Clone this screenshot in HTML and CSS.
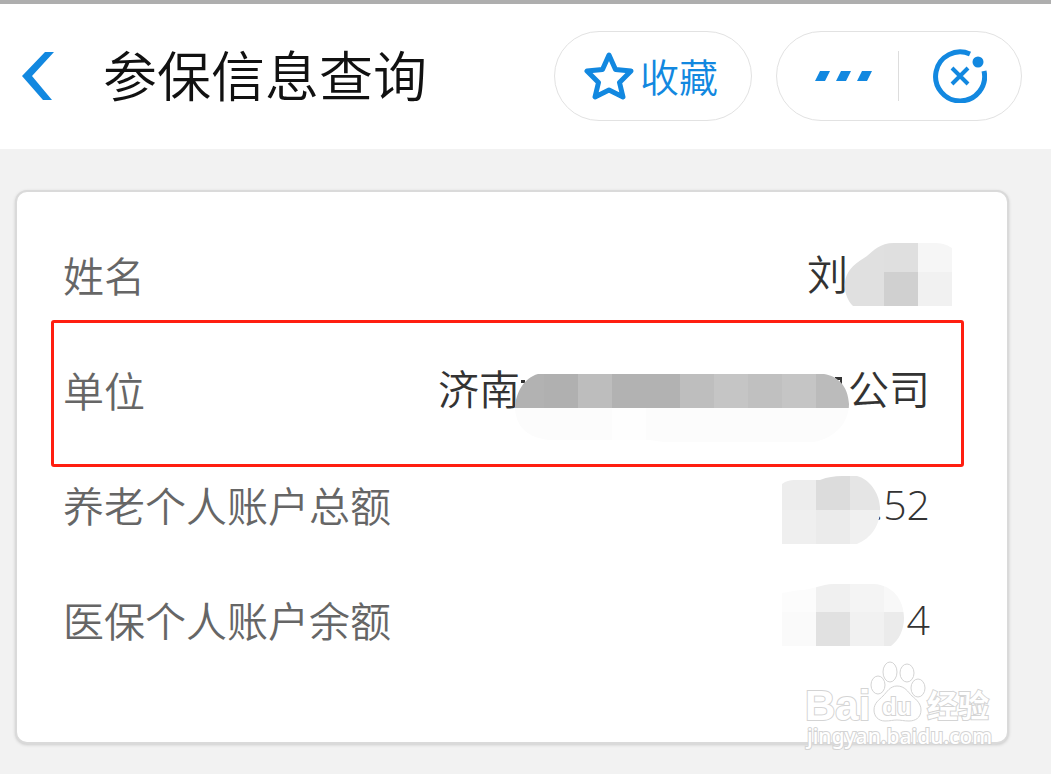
FILE: index.html
```html
<!DOCTYPE html>
<html lang="zh-CN">
<head>
  <meta charset="UTF-8">
  <title>参保信息查询</title>
  <link rel="stylesheet" href="styles.css">
</head>
<body>

  <header class="top-bar">
    <button class="back-button" aria-label="返回">
      <svg width="32" height="48" viewBox="0 0 32 48">
        <path d="M23 0h9L10 24l20 24h-9L0 24z" fill="#1288e0"/>
      </svg>
    </button>
    <h1>参保信息查询</h1>

    <button class="pill favorite">
      <svg width="50" height="48" viewBox="0 0 50 48">
        <path d="M25 3l6.500 14.500L47 19l-11.500 11.500L39 45l-14-7-14 7 3.500-14.500L3 19l15.500-1.500z" fill="none" stroke="#1288e0" stroke-width="5" stroke-linejoin="round"/>
      </svg>
      <span>收藏</span>
    </button>

    <div class="pill menu">
      <button class="more-button" aria-label="更多">
        <svg width="58" height="10" viewBox="0 0 58 10">
          <path d="M5 0h10l-5 10H0zM26 0h10l-5 10H21zM47 0h10l-5 10H42z" fill="#1288e0"/>
        </svg>
      </button>
      <button class="close-button" aria-label="关闭">
        <svg width="54" height="54" viewBox="0 0 54 54">
          <path d="M37 5A24.500 24.500 0 1 0 51 22" fill="none" stroke="#1288e0" stroke-width="5"/>
          <circle cx="45" cy="13" r="5.500" fill="#1288e0"/>
          <path d="M19 19l16 16M35 19L19 35" stroke="#1288e0" stroke-width="4"/>
        </svg>
      </button>
    </div>
  </header>

  <main class="card">
    <dl class="info">
      <div class="row">
        <dt>姓名</dt>
        <dd><span>刘</span><span class="blank blank-name"></span></dd>
        <svg class="mosaic mosaic-name" width="108" height="63" viewBox="0 0 108 63">
          <clipPath id="clipName"><path d="M9 63C3 57 0 48 1 39 2 30 8 22 20 15 28 10 34 0 50 0h39c8 0 13 1 19 5v58z"/></clipPath>
          <g clip-path="url(#clipName)">
            <path d="M0 0h40v63H0z" fill="#e0e0e0"/>
            <path d="M40 0h34v29H40z" fill="#dfdfdf"/>
            <path d="M40 29h34v34H40z" fill="#d0d0d0"/>
            <path d="M74 0h34v29H74z" fill="#f6f6f6"/>
            <path d="M74 29h34v34H74z" fill="#f1f1f1"/>
          </g>
        </svg>
      </div>

      <div class="row highlight">
        <dt>单位</dt>
        <dd><span>济南</span><span class="blank blank-company"></span><span>公司</span></dd>
        <svg class="mosaic mosaic-company" width="335" height="68" viewBox="0 0 335 68">
          <clipPath id="clipCompany"><path d="M1 34C2 18 10 4 24 0h286c14 2 24 12 25 30 0 20-15 34-35 38H150l-15-2H35C15 64 2 54 1 34z"/></clipPath>
          <path d="M7 6h4v3H7zM321 3h7v8h-2V6h-5z" fill="#333"/>
          <g clip-path="url(#clipCompany)">
            <path d="M0 0h30v34H0z" fill="#b2b2b2"/>
            <path d="M30 0h34v34H30z" fill="#b0b0b0"/>
            <path d="M64 0h34v34H64z" fill="#bdbdbd"/>
            <path d="M98 0h68v34H98z" fill="#b2b2b2"/>
            <path d="M166 0h34v34H166z" fill="#bebebe"/>
            <path d="M200 0h34v34H200z" fill="#c5c5c5"/>
            <path d="M234 0h34v34H234z" fill="#c0c0c0"/>
            <path d="M268 0h34v34H268z" fill="#c5c5c5"/>
            <path d="M302 0h33v34H302z" fill="#bbb"/>
            <path d="M0 34h335v34H0z" fill="#fcfcfc"/>
            <path d="M98 34h34v34H98z" fill="#fefefe"/>
          </g>
        </svg>
      </div>

      <div class="row">
        <dt>养老个人账户总额</dt>
        <dd>.52</dd>
        <svg class="mosaic mosaic-pension" width="99" height="68" viewBox="0 0 99 68">
          <clipPath id="clipPension"><path d="M0 8C4 5 8 4 12 4h26C46 1 52 0 60 0h15c12 3 22 16 23 31 1 17-8 31-23 37H0z"/></clipPath>
          <g clip-path="url(#clipPension)">
            <path d="M0 0h34v34H0z" fill="#ededed"/>
            <path d="M34 0h34v34H34z" fill="#dcdcdc"/>
            <path d="M68 0h31v34H68z" fill="#e5e5e5"/>
            <path d="M0 34h34v34H0z" fill="#efefef"/>
            <path d="M34 34h34v34H34z" fill="#ebebeb"/>
            <path d="M68 34h31v34H68z" fill="#f0f0f0"/>
          </g>
        </svg>
      </div>

      <div class="row">
        <dt>医保个人账户余额</dt>
        <dd>4</dd>
        <svg class="mosaic mosaic-medical" width="122" height="62" viewBox="0 0 122 62">
          <clipPath id="clipMedical"><path d="M0 9l18-3c14 0 20-6 34-6h40c18 1 30 15 30 34 0 12-5 22-13 28H0z"/></clipPath>
          <g clip-path="url(#clipMedical)">
            <path d="M0 0h34v28H0z" fill="#fcfcfc"/>
            <path d="M34 0h34v28H34z" fill="#f0f0f0"/>
            <path d="M68 0h34v28H68z" fill="#f4f4f4"/>
            <path d="M102 0h20v28H102z" fill="#f8f8f8"/>
            <path d="M0 28h34v34H0z" fill="#fafafa"/>
            <path d="M34 28h34v34H34z" fill="#e1e1e1"/>
            <path d="M68 28h34v34H68z" fill="#f1f1f1"/>
            <path d="M102 28h20v34H102z" fill="#ebebeb"/>
          </g>
        </svg>
      </div>
    </dl>

    <svg class="watermark" width="200" height="100" viewBox="0 0 200 100">
      <text class="wm-logo" x="5" y="65">Bai</text>
      <ellipse cx="78" cy="30" rx="7" ry="9"/>
      <ellipse cx="90" cy="17" rx="7" ry="10"/>
      <ellipse cx="107" cy="18" rx="7" ry="9"/>
      <ellipse cx="118" cy="33" rx="7" ry="9"/>
      <path d="M97 31c8 0 11 6 15 10 5 4 9 8 9 14 0 8-6 11-12 11-5 0-8-1-12-1s-7 1-12 1c-7 0-11-5-11-11 0-7 5-10 9-14 4-4 7-10 14-10z"/>
      <text class="wm-du" x="82" y="60">du</text>
      <text class="wm-cn" x="127" y="62">经验</text>
      <text class="wm-url" x="7" y="89">jingyan.baidu.com</text>
    </svg>
  </main>

</body>
</html>
```
FILE: styles.css
```css
* {
  box-sizing: border-box;
}
body {
  margin: 0;
  background: #f2f2f2;
  color: #333;
  font-family: "Open Sans", "Noto Sans CJK SC", sans-serif;
  font-weight: 350;
}
button {
  padding: 0;
  border: none;
  background: none;
  font: inherit;
  color: inherit;
  cursor: pointer;
}
svg {
  display: block;
  flex: none;
}

/* header */
.top-bar {
  display: flex;
  align-items: center;
  height: 149px;
  padding: 0 29px 1px 22px;
  border-top: 4px solid #aeaeae;
  background: #fff;
}
.top-bar h1 {
  margin: 0 auto 0 49px;
  padding-bottom: 4px;
  font-family: "Noto Sans CJK SC", sans-serif;
  font-size: 54px;
  font-weight: 350;
  line-height: 80px;
  color: #111;
}
.pill {
  display: flex;
  align-items: center;
  height: 90px;
  border: 1px solid #e2e2e2;
  border-radius: 45px;
}
.favorite {
  gap: 6px;
  width: 198px;
  margin-right: 24px;
  padding-left: 29px;
  font-family: "Noto Sans CJK SC", sans-serif;
  font-size: 39px;
  line-height: 58px;
  color: #1288e0;
}
.favorite span {
  padding-bottom: 2px;
}
.menu {
  width: 246px;
}
.menu button {
  display: flex;
  align-items: center;
  justify-content: center;
  height: 50px;
}
.menu .more-button {
  width: 50%;
  padding-left: 12px;
  border-right: 1px solid #ddd;
}
.menu .close-button {
  width: 50%;
}

/* info card */
.card {
  position: relative;
  margin: 41px 42px 30px 15px;
  padding: 26px 77px 64px 46px;
  border: 2px solid #dadada;
  border-radius: 12px;
  background: #fff;
  box-shadow: 0 1px 3px #ccc;
}
.info {
  margin: 0;
}
.row {
  position: relative;
  display: flex;
  align-items: center;
  justify-content: space-between;
  height: 115px;
  padding-bottom: 4px;
  font-size: 41px;
  line-height: 60px;
}
.row dt {
  font-family: "Noto Sans CJK SC", sans-serif;
  color: #666;
}
.row dd {
  display: flex;
  margin: 0;
}
.blank-name {
  width: 82px;
}
.blank-company {
  width: 328px;
}
.highlight::after {
  content: "";
  position: absolute;
  inset: -13px -34px -19px -12px;
  border: 3px solid #ff1e10;
  border-radius: 3px;
}

/* mosaic over the private parts */
.mosaic {
  position: absolute;
}
.mosaic-name {
  top: 25px;
  right: -22px;
}
.mosaic-company {
  top: 41px;
  right: 81px;
}
.mosaic-pension {
  top: 28px;
  right: 49px;
}
.mosaic-medical {
  top: 21px;
  right: 26px;
}

.watermark {
  position: absolute;
  right: 7px;
  bottom: -13px;
  fill: #fff;
  stroke: #d4d4d4;
  stroke-width: 1px;
}
.watermark text {
  paint-order: stroke;
  stroke-width: 2px;
}
.wm-logo {
  font: bold 42px "Liberation Sans", sans-serif;
}
.wm-du {
  font: bold 24px "Liberation Sans", sans-serif;
}
.wm-cn {
  font: bold 31px "Noto Sans CJK SC", sans-serif;
}
.wm-url {
  font: 500 21px "Noto Sans", sans-serif;
}
```
